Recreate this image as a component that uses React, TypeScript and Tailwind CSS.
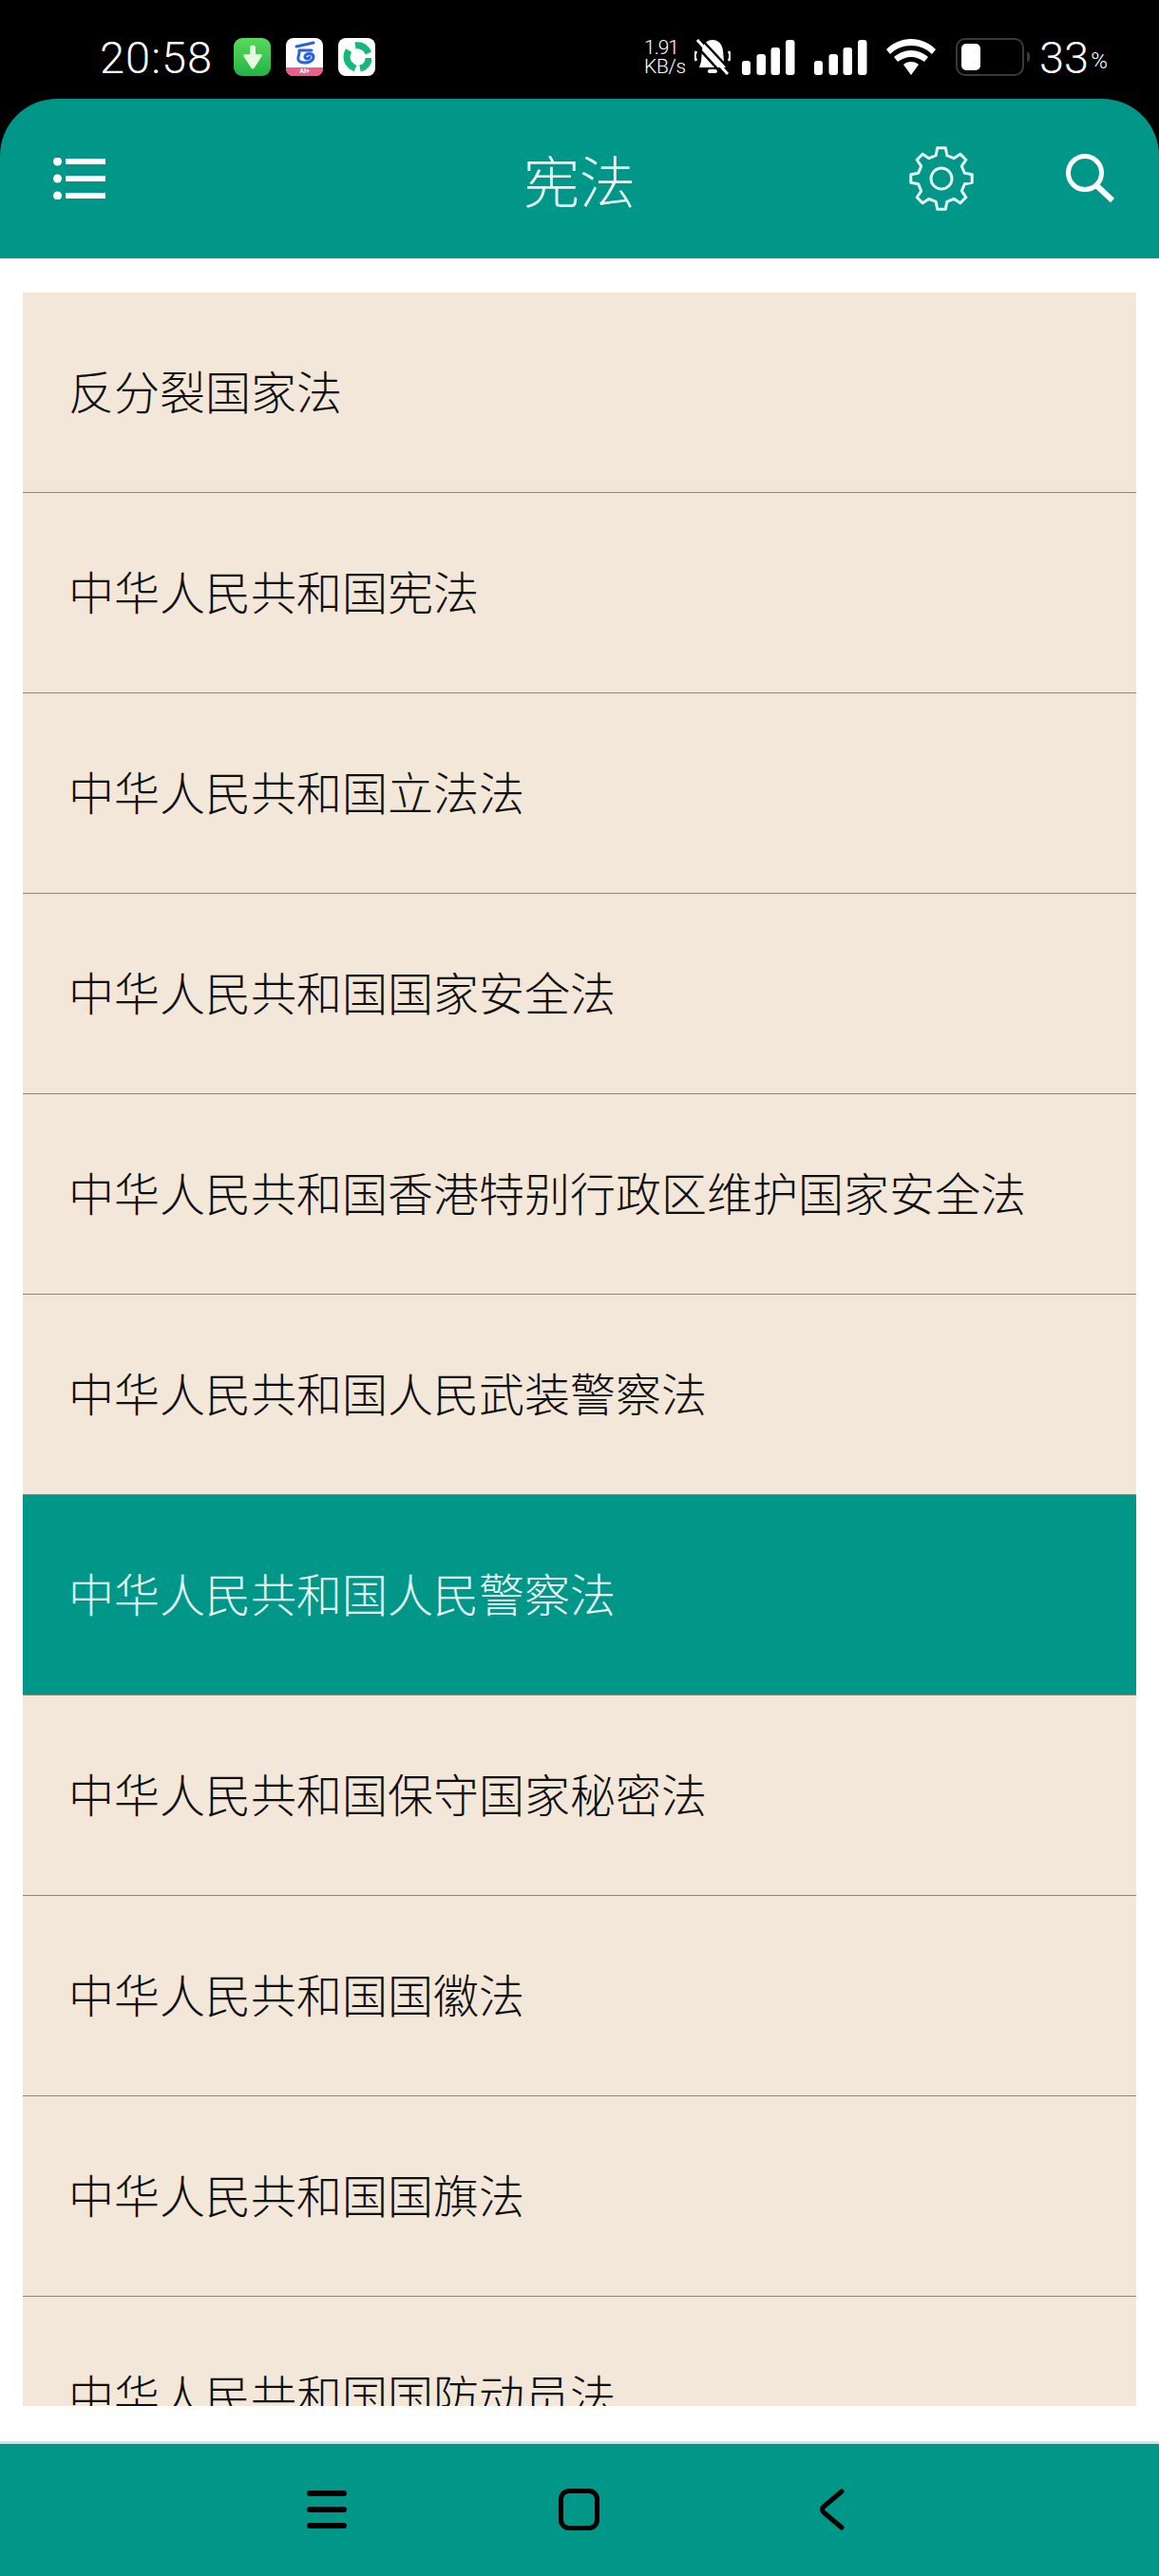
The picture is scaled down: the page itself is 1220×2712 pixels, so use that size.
const rows = [
  '反分裂国家法',
  '中华人民共和国宪法',
  '中华人民共和国立法法',
  '中华人民共和国国家安全法',
  '中华人民共和国香港特别行政区维护国家安全法',
  '中华人民共和国人民武装警察法',
  '中华人民共和国人民警察法',
  '中华人民共和国保守国家秘密法',
  '中华人民共和国国徽法',
  '中华人民共和国国旗法',
  '中华人民共和国国防动员法',
];

const ACTIVE = 6;

// 8 tooth cog outline
const gearPath = () => {
  const pts: string[] = [];
  const n = 8;
  for (let i = 0; i < n; i++) {
    const a = (i * Math.PI * 2) / n - Math.PI / 2;
    const step = (Math.PI * 2) / n;
    const at = (r: number, o: number) =>
      `${(35 + r * Math.cos(a + o * step)).toFixed(2)} ${(35 + r * Math.sin(a + o * step)).toFixed(2)}`;
    pts.push(at(25, -0.3), at(32.5, -0.17), at(32.5, 0.17), at(25, 0.3));
  }
  return 'M' + pts.join('L') + 'Z';
};

const SignalBars = ({ className }: { className: string }) => (
  <svg width="56" height="37" viewBox="0 0 56 37" className={className} fill="white">
    <rect x="0" y="22" width="9" height="15" rx="3" />
    <rect x="15.5" y="15" width="9.5" height="22" rx="3" />
    <rect x="30.5" y="8" width="9.5" height="29" rx="3" />
    <rect x="46" y="0" width="9.5" height="37" rx="3" />
  </svg>
);

export default function App() {
  return (
    <div className="w-[1220px] h-[2712px] flex flex-col bg-white overflow-hidden font-['Noto_Sans_CJK_SC','Noto_Sans',sans-serif]">
      {/* status bar + app bar sit on black so the top corners show */}
      <div className="bg-black">
        <div className="h-[104px] pt-[16px] flex items-center text-white font-['Roboto',sans-serif]">
          <span className="ml-[105px] w-[120px] text-[47px] font-light tracking-[1px] leading-none">20:58</span>
          <div className="ml-[21px] w-[39px] h-[40px] rounded-[9px] bg-gradient-to-b from-[#57d95c] to-[#1db644] flex items-center justify-center">
            <svg width="24" height="30" viewBox="0 0 24 30" fill="#e8f8e0">
              <path d="M9 4q3-3 6 0v8h5q3 1 1 3l-7 11q-2 3-4 0L3 15q-2-2 1-3h5z" />
            </svg>
          </div>
          <div className="ml-[16px] w-[39px] h-[40px] rounded-[8px] bg-white overflow-hidden flex flex-col items-center">
            <svg width="26" height="31" viewBox="0 0 26 31" fill="none" stroke="#2a63d8" strokeLinecap="round">
              <path d="M4 9 22 5" strokeWidth="3" />
              <path d="M20 13H6c4 2-4 9 2 12 5 2 13 1 14-5 0-4-7-5-9-1-1 3 4 4 5 1" strokeWidth="3" />
            </svg>
            <span className="w-full h-[9px] bg-[#ee5c8c] text-white text-[7px] font-bold leading-[9px] text-center">AI+</span>
          </div>
          <div className="ml-[16px] w-[39px] h-[40px] rounded-[8px] bg-white flex items-center justify-center">
            {/* three swooshes making a ring */}
            <svg width="30" height="32" viewBox="0 0 30 32" fill="none" stroke="#16b877" strokeWidth="7">
              <path d="M13 4C19 3 24 6 27 12" />
              <path d="M6 9C2 16 4 24 13 28" />
              <path d="M27 17C27 23 23 27 18 28" />
            </svg>
          </div>

          <div className="ml-[283px] w-[44px] text-[21px] leading-[20px] font-light -tracking-[0.3px]">
            <div className="-tracking-[1px]">1.91</div>
            <div>KB/s</div>
          </div>
          <svg width="38" height="38" viewBox="0 0 38 38" className="ml-[9px]" fill="white">
            <path d="M19 1c6 0 10 4 11 11l1 12 2 6H5l2-6 1-12C9 5 13 1 19 1z" />
            <rect x="14" y="32" width="10" height="4" rx="2" />
            <path d="M2 13q-3 5 0 10M36 13q3 5 0 10" stroke="white" strokeWidth="2.5" fill="none" />
            <path d="M7 0 37 32" stroke="black" strokeWidth="2.5" />
            <path d="M3 1 35 37" stroke="white" strokeWidth="3" />
            <path d="M-1 4 31 39" stroke="black" strokeWidth="2.5" />
          </svg>
          <SignalBars className="ml-[12px]" />
          <SignalBars className="ml-[20px]" />
          <svg width="52" height="38" viewBox="0 0 52 38" className="ml-[20px]" fill="white">
            <path d="M26 0c10 0 19 4 26 11l-4 5C42 10 34 7 26 7S10 10 4 16l-4-5C7 4 16 0 26 0z" />
            <path d="M26 12c7 0 13 3 18 7l-4 5c-4-3-9-5-14-5s-10 2-14 5l-4-5c5-4 11-7 18-7z" />
            <path d="M26 24c3 0 6 1 8 3l-8 11-8-11c2-2 5-3 8-3z" />
          </svg>
          <div className="ml-[21px] w-[72px] h-[40px] rounded-[10px] border-[2px] border-[#3a3a3a] p-[4px]">
            <div className="w-[20px] h-full rounded-[5px] bg-white" />
          </div>
          <div className="ml-[3px] w-[3px] h-[10px] rounded-r-full bg-[#3a3a3a]" />
          <span className="ml-[10px] text-[47px] font-light leading-none">33</span>
          <span className="ml-[2px] mt-[8px] text-[24px] font-light leading-none">%</span>
        </div>
        <header className="h-[168px] bg-[#009688] rounded-t-[60px] flex items-center text-white">
          <svg width="55" height="44" viewBox="0 0 55 44" className="ml-[56px]" fill="white">
            <circle cx="4.5" cy="4" r="4.5" />
            <circle cx="4.5" cy="22" r="4.5" />
            <circle cx="4.5" cy="40" r="4.5" />
            <rect x="13" y="1" width="42" height="6" />
            <rect x="13" y="19" width="42" height="6" />
            <rect x="13" y="37" width="42" height="6" />
          </svg>
          <span className="ml-[440px] w-[118px] text-[59px] font-light leading-none text-center text-[#e6f7f4]">宪法</span>
          <svg width="70" height="70" viewBox="0 0 70 70" className="ml-[287px]" fill="none" stroke="#e6f7f4" strokeWidth="3">
            <path d={gearPath()} strokeLinejoin="round" />
            <circle cx="35" cy="35" r="11" />
          </svg>
          <svg width="52" height="52" viewBox="0 0 52 52" className="ml-[96px]" fill="none" stroke="white">
            <circle cx="20" cy="20" r="17.5" strokeWidth="5" />
            <path d="M32 33 49 49" strokeWidth="6" />
          </svg>
        </header>
      </div>

      <main className="flex-1 min-h-0 pt-[36px] px-[24px] pb-[37px] flex flex-col">
        <div className="flex-1 min-h-0 overflow-hidden bg-[#f3e7d9]">
          {rows.map((t, i) => (
            <div
              key={t}
              className={
                i === ACTIVE
                  ? 'h-[211px] pl-[48px] pb-[6px] flex items-center text-[48px] font-light bg-[#009688] text-[#e6f7f4] border-b border-[#8f8679]'
                  : 'h-[211px] pl-[48px] pb-[6px] flex items-center text-[48px] font-light text-[#0f0f0f] border-b border-[#8f8679]'
              }
            >
              {t}
            </div>
          ))}
        </div>
      </main>

      <nav className="h-[142px] shrink-0 bg-[#009688] border-t-[3px] border-[#cfe3ea] flex items-center">
        <svg width="42" height="40" viewBox="0 0 42 40" className="ml-[323px] -translate-y-[1px]" fill="black">
          <rect x="0" y="0" width="42" height="6" rx="3" />
          <rect x="0" y="17" width="42" height="6" rx="3" />
          <rect x="0" y="34" width="42" height="6" rx="3" />
        </svg>
        <div className="ml-[223px] w-[43px] h-[44px] rounded-[11px] border-[5px] border-black -translate-y-[1px]" />
        <svg width="27" height="44" viewBox="0 0 27 44" className="ml-[231px] -translate-y-[1px]" fill="none" stroke="black" strokeWidth="5" strokeLinecap="round" strokeLinejoin="round">
          <path d="M24 3 5 19q-3 3 0 6L24 41" />
        </svg>
      </nav>
    </div>
  );
}
